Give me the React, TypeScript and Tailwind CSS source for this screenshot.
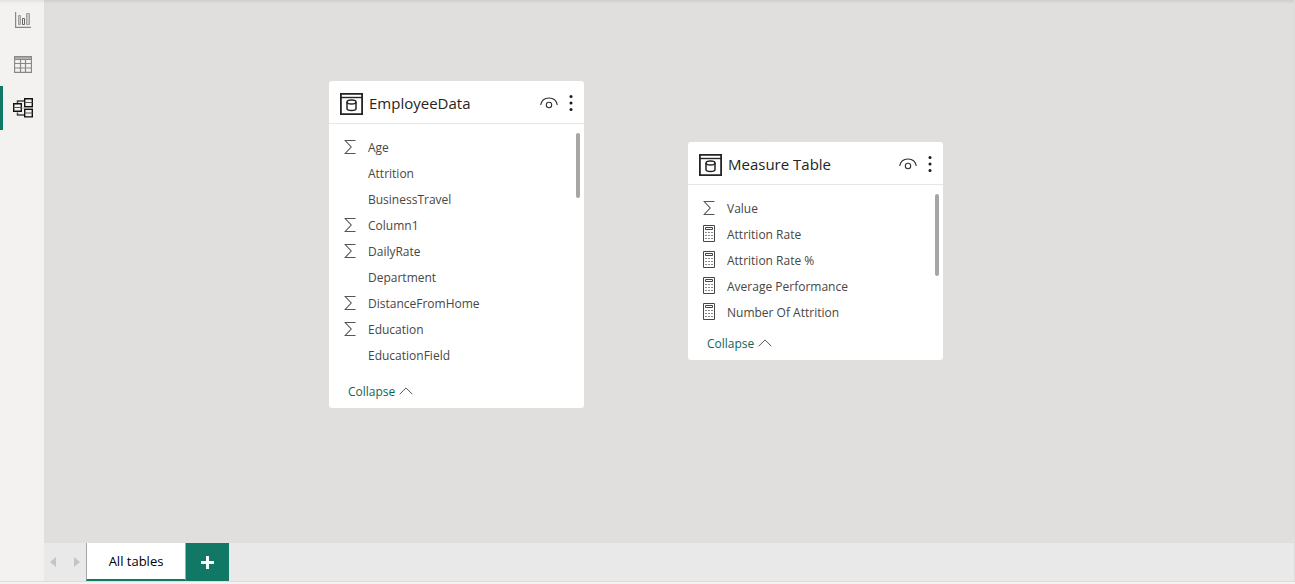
import type { ReactNode } from 'react';

type FieldKind = 'sum' | 'measure' | 'plain';

interface Field {
  name: string;
  kind: FieldKind;
}

const employeeFields: Field[] = [
  { name: 'Age', kind: 'sum' },
  { name: 'Attrition', kind: 'plain' },
  { name: 'BusinessTravel', kind: 'plain' },
  { name: 'Column1', kind: 'sum' },
  { name: 'DailyRate', kind: 'sum' },
  { name: 'Department', kind: 'plain' },
  { name: 'DistanceFromHome', kind: 'sum' },
  { name: 'Education', kind: 'sum' },
  { name: 'EducationField', kind: 'plain' },
];

const measureFields: Field[] = [
  { name: 'Value', kind: 'sum' },
  { name: 'Attrition Rate', kind: 'measure' },
  { name: 'Attrition Rate %', kind: 'measure' },
  { name: 'Average Performance', kind: 'measure' },
  { name: 'Number Of Attrition', kind: 'measure' },
];

function ReportIcon() {
  return (
    <svg width="16" height="16" viewBox="0 0 16 16" fill="none" stroke="#8a8886">
      <path d="M.5 0v15.500H16" strokeWidth="1.400" />
      <path d="M3.500 3.500h2v9h-2zM11.500 1.500h3v11h-3z" stroke="#a3a19f" fill="#c8c6c4" />
      <path d="M7.500 6.500h2v6h-2z" stroke="#666462" />
    </svg>
  );
}

function DataIcon() {
  return (
    <svg width="18" height="17" viewBox="0 0 18 17" fill="none" stroke="#8a8886">
      <path d="M1 2h16" stroke="#b5b3b1" strokeWidth="2" />
      <path d="M.5.5h17v16H.5z" strokeWidth="1.300" />
      <path d="M.5 3.500h17M.5 7.500h17M.5 12h17M6.500 3v13.500M11.500 3v13.500" strokeWidth="1.200" />
    </svg>
  );
}

function ModelIcon() {
  return (
    <svg width="20" height="20" viewBox="0 0 20 20" fill="none" stroke="#111">
      <path d="M4.500 5V3h7M4.500 14.500V17h7" stroke="#444" strokeWidth="1.500" />
      <path d="M11.700.7h7.600v8h-7.600zM11.700 11.300h7.600v7.600h-7.600zM.7 5.700h7.600v7.600H.7z" strokeWidth="1.400" />
      <path d="M11.500 4.500h8M11.500 15h8M.5 9.500h8" stroke="#555" />
      <path d="M8.500 10h11" stroke="#aaa" />
    </svg>
  );
}

function TableIcon() {
  return (
    <svg width="23" height="22" viewBox="0 0 23 22" fill="none" stroke="#252423">
      <path d="M.9.9h21.200v20.200H.9z" strokeWidth="1.800" />
      <path d="M1 4.500h21" strokeWidth="1.400" />
      <ellipse cx="11.500" cy="9" rx="4.500" ry="2" strokeWidth="1.500" />
      <path d="M7 9v6.500c0 1.300 2 2 4.500 2s4.500-.7 4.500-2V9" strokeWidth="1.500" />
    </svg>
  );
}

function EyeIcon() {
  return (
    <svg width="18" height="12" viewBox="0 0 18 12" fill="none" stroke="#333" strokeWidth="1.100">
      <path d="M.7 8C1.500 3.500 5 1 9 1s7.500 2.500 8.300 7" />
      <circle cx="9" cy="8" r="2.700" />
    </svg>
  );
}

function MoreIcon() {
  return (
    <svg width="4" height="16" viewBox="0 0 4 16" fill="#1b1a19">
      <circle cx="2" cy="1.500" r="1.500" />
      <circle cx="2" cy="8" r="1.500" />
      <circle cx="2" cy="14.500" r="1.500" />
    </svg>
  );
}

function SumIcon() {
  return (
    <svg width="12" height="16" viewBox="0 0 12 16" fill="none" stroke="#555">
      <path d="M11.500 1.500H1.200L7.200 8l-6 6.500h10.300" strokeWidth="1.100" />
    </svg>
  );
}

function MeasureIcon() {
  return (
    <svg width="12" height="17" viewBox="0 0 12 17" fill="none" stroke="#484644">
      <path d="M.5.5h11v16H.5z" />
      <path d="M2.500 2.500h7v2h-7z" />
      <path d="M2 7.500h8M2 10.500h8M2 13.500h8" stroke="#888" strokeDasharray="2 1" />
    </svg>
  );
}

function ChevronUpIcon() {
  return (
    <svg width="14" height="8" viewBox="0 0 14 8" fill="none" stroke="#4d5957">
      <path d="M.7 7.200 7 .9l6.300 6.300" />
    </svg>
  );
}

function FieldIcon({ kind }: { kind: FieldKind }) {
  if (kind === 'sum') return <SumIcon />;
  if (kind === 'measure') return <MeasureIcon />;
  return null;
}

function ViewButton({ label, active, children }: { label: string; active?: boolean; children: ReactNode }) {
  return (
    <button
      type="button"
      aria-label={label}
      aria-pressed={!!active}
      className={`flex h-11 w-full items-center justify-center border-l-[3px] pr-0.5 ${
        active ? 'border-[#117865]' : 'border-transparent'
      }`}
    >
      {children}
    </button>
  );
}

interface TableCardProps {
  title: string;
  fields: Field[];
  position: string;
  listHeight: string;
  thumbHeight: string;
}

function TableCard({ title, fields, position, listHeight, thumbHeight }: TableCardProps) {
  return (
    <section className={`absolute w-[255px] rounded-[3px] bg-white ${position}`}>
      <header className="flex h-[43px] items-center border-b border-[#e6e6e6] pt-0.5 pr-[11px] pl-[11px]">
        <span className="pt-0.5">
          <TableIcon />
        </span>
        <h2 className="ml-1.5 flex-1 text-[15px] leading-5 font-medium text-[#252423]">{title}</h2>
        <button type="button" aria-label={`Hide ${title}`} className="mr-[11px]">
          <EyeIcon />
        </button>
        <button type="button" aria-label={`More options for ${title}`}>
          <MoreIcon />
        </button>
      </header>
      <div className="flex pt-[9px] pr-1">
        <ul className={`flex-1 overflow-hidden pt-px pl-[15px] ${listHeight}`}>
          {fields.map((field) => (
            <li key={field.name} className="flex h-[26px] items-center text-xs text-[#484644]">
              <span className="w-6 shrink-0 pb-px">
                <FieldIcon kind={field.kind} />
              </span>
              <span className="pt-0.5">{field.name}</span>
            </li>
          ))}
        </ul>
        <div className={`w-1 rounded-full bg-[#a6a6a6] ${thumbHeight}`} />
      </div>
      <footer className="flex h-[35px] items-center pl-[19px]">
        <button type="button" className="flex items-center gap-1 text-xs text-[#0e6656]">
          <span className="pt-0.5">Collapse</span>
          <ChevronUpIcon />
        </button>
      </footer>
    </section>
  );
}

function PageBar() {
  return (
    <nav aria-label="Layouts" className="flex h-[38px] items-stretch bg-[#e9e9e9]">
      <div className="flex w-[42px] items-center justify-between pr-1.5 pl-1.5">
        <button type="button" aria-label="Previous layout">
          <svg width="6" height="10" viewBox="0 0 6 10" fill="#c4c4c4">
            <path d="M6 0v10L0 5z" />
          </svg>
        </button>
        <button type="button" aria-label="Next layout">
          <svg width="6" height="10" viewBox="0 0 6 10" fill="#c4c4c4">
            <path d="M0 0v10l6-5z" />
          </svg>
        </button>
      </div>
      <button
        type="button"
        className="w-[100px] border-x border-b-2 border-x-[#a6a6a6] border-b-[#117865] bg-white pt-0.5 text-[13px] text-black"
      >
        All tables
      </button>
      <button type="button" aria-label="New layout" className="flex w-[43px] items-center justify-center bg-[#117865]">
        <svg width="13" height="13" viewBox="0 0 13 13" fill="none" stroke="#fff" strokeWidth="3">
          <path d="M6.500 0v13M0 6.500h13" />
        </svg>
      </button>
    </nav>
  );
}

export default function App() {
  return (
    <div className="flex h-screen flex-col bg-[#f3f2f1] font-['Open_Sans',sans-serif]">
      <div className="flex min-h-0 flex-1 border-b border-[#dcdcdc]">
        <aside className="flex w-11 shrink-0 flex-col bg-[#f3f2f1] bg-linear-to-b from-[#e4e3e2] to-[#f3f2f1] to-[4px]">
          <div className="-mt-0.5">
            <ViewButton label="Report view">
              <ReportIcon />
            </ViewButton>
            <ViewButton label="Data view">
              <DataIcon />
            </ViewButton>
            <ViewButton label="Model view" active>
              <ModelIcon />
            </ViewButton>
          </div>
        </aside>
        <div className="flex min-w-0 flex-1 flex-col border-r border-[#dcdcdc]">
          <main className="relative min-h-0 flex-1 overflow-hidden bg-linear-to-b from-[#cfcecd] to-[#e0dfdd] to-[4px]">
            <TableCard
              title="EmployeeData"
              fields={employeeFields}
              position="top-[81px] left-[285px]"
              listHeight="h-[240px]"
              thumbHeight="h-[65px]"
            />
            <TableCard
              title="Measure Table"
              fields={measureFields}
              position="top-[142px] left-[644px]"
              listHeight="h-[131px]"
              thumbHeight="h-[82px]"
            />
          </main>
          <PageBar />
        </div>
      </div>
      <div className="h-0.5 shrink-0" />
    </div>
  );
}
